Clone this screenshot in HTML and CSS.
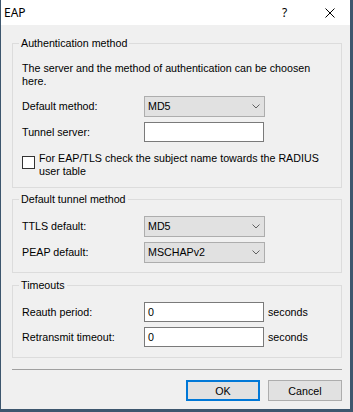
FILE: index.html
```html
<!DOCTYPE html>
<html lang="en">
<head>
    <meta charset="UTF-8">
    <title>EAP</title>
    <link rel="stylesheet" href="styles.css">
</head>
<body>

<div class="window">
    <!-- title bar -->
    <div class="titlebar">
        <span class="title">EAP</span>
        <span class="help">?</span>
        <span class="close">
            <svg width="10" height="10" viewBox="0 0 10 10"><path d="M0.5 0.5 L9.5 9.5 M9.5 0.5 L0.5 9.5" stroke="#000" stroke-width="1" fill="none"/></svg>
        </span>
    </div>

    <fieldset class="group first">
        <legend>Authentication method</legend>
        <div class="group-body">
            <p class="desc">The server and the method of authentication can be choosen<br>here.</p>
            <div class="rows">
                <div class="row">
                    <label>Default method:</label>
                    <div class="select"><span>MD5</span><svg width="8" height="5" viewBox="0 0 8 5"><path d="M0.5 0.5 L4 4 L7.5 0.5" stroke="#606060" fill="none"/></svg></div>
                </div>
                <div class="row">
                    <label>Tunnel server:</label>
                    <div class="input"></div>
                </div>
            </div>
            <div class="check">
                <span class="box"></span>
                <span class="check-text">For EAP/TLS check the subject name towards the RADIUS<br>user table</span>
            </div>
        </div>
    </fieldset>

    <fieldset class="group second">
        <legend>Default tunnel method</legend>
        <div class="group-body">
            <div class="rows">
                <div class="row">
                    <label>TTLS default:</label>
                    <div class="select"><span>MD5</span><svg width="8" height="5" viewBox="0 0 8 5"><path d="M0.5 0.5 L4 4 L7.5 0.5" stroke="#606060" fill="none"/></svg></div>
                </div>
                <div class="row">
                    <label>PEAP default:</label>
                    <div class="select"><span>MSCHAPv2</span><svg width="8" height="5" viewBox="0 0 8 5"><path d="M0.5 0.5 L4 4 L7.5 0.5" stroke="#606060" fill="none"/></svg></div>
                </div>
            </div>
        </div>
    </fieldset>

    <fieldset class="group third">
        <legend>Timeouts</legend>
        <div class="group-body">
            <div class="rows">
                <div class="row">
                    <label>Reauth period:</label>
                    <div class="input small">0</div>
                    <span class="unit">seconds</span>
                </div>
                <div class="row">
                    <label>Retransmit timeout:</label>
                    <div class="input small">0</div>
                    <span class="unit">seconds</span>
                </div>
            </div>
        </div>
    </fieldset>

    <div class="separator"></div>

    <div class="buttons">
        <button class="btn default">OK</button>
        <button class="btn">Cancel</button>
    </div>
</div>

</body>
</html>
```

FILE: styles.css
```css
body {
    margin: 0;
    padding: 0;
    background-color: #3d566e;
    font-family: "Liberation Sans", Arial, sans-serif;
    font-size: 10.7px;
    line-height: 13px;
    color: #000;
}

.window {
    width: 349px;
    height: 409px;
    margin-left: 1px;
    background-color: #f0f0f0;
    display: flex;
    flex-direction: column;
    overflow: hidden;
}

.titlebar {
    height: 25px;
    background-color: #fff;
    display: flex;
    align-items: center;
    padding-left: 3px;
    font-family: "Noto Sans", "Open Sans", sans-serif;
    font-size: 12px;
}

.title {
    flex: 1;
}

.help {
    width: 10px;
    margin-right: 33px;
}

.close {
    display: flex;
    margin-right: 15px;
    margin-top: 1px;
}

/* group boxes */
.group {
    margin: 0 8px 0 11px;
    padding: 0;
    border: 1px solid #dcdcdc;
    min-width: 0;
}

.group legend {
    margin-left: 6px;
    padding: 0 2px;
    line-height: 13px;
}

.first {
    margin-top: 12px;
}

.second {
    margin-top: 5px;
}

.third {
    margin-top: 6px;
}

.group-body {
    padding: 12px 9px 9px 9px;
}

.second .group-body {
    padding-top: 10px;
}

.third .group-body {
    padding-top: 10px;
    padding-bottom: 10px;
}

.desc {
    margin: 0 0 8px 0;
}

.rows {
    display: flex;
    flex-direction: column;
    gap: 5px;
}

.row {
    display: flex;
    align-items: center;
}

.row label {
    width: 122px;
}

.select {
    width: 112px;
    height: 19px;
    border: 1px solid #adadad;
    background-color: #e1e1e1;
    display: flex;
    align-items: center;
    justify-content: space-between;
    padding: 0 4px 0 3px;
}

.select svg {
    display: block;
}

.input {
    width: 115px;
    height: 18px;
    border: 1px solid #7a7a7a;
    background-color: #fff;
    padding: 0 0 0 3px;
    line-height: 18px;
}

.unit {
    margin-left: 4px;
}

.check {
    display: flex;
    align-items: flex-start;
    margin-top: 10px;
}

.box {
    width: 11px;
    height: 11px;
    border: 1px solid #333;
    background-color: #fff;
    margin-top: 4px;
    margin-right: 4px;
    flex-shrink: 0;
}

.separator {
    margin: 11px 8px 0 11px;
    height: 1px;
    background-color: #a0a0a0;
}

.buttons {
    display: flex;
    justify-content: flex-end;
    gap: 8px;
    margin: 10px 8px 0 0;
}

.btn {
    width: 74px;
    height: 21px;
    margin: 0;
    padding: 0;
    border: 1px solid #adadad;
    background-color: #e1e1e1;
    font-family: "Liberation Sans", Arial, sans-serif;
    font-size: 10.7px;
    color: #000;
}

.btn.default {
    border: 2px solid #0078d7;
}
```
